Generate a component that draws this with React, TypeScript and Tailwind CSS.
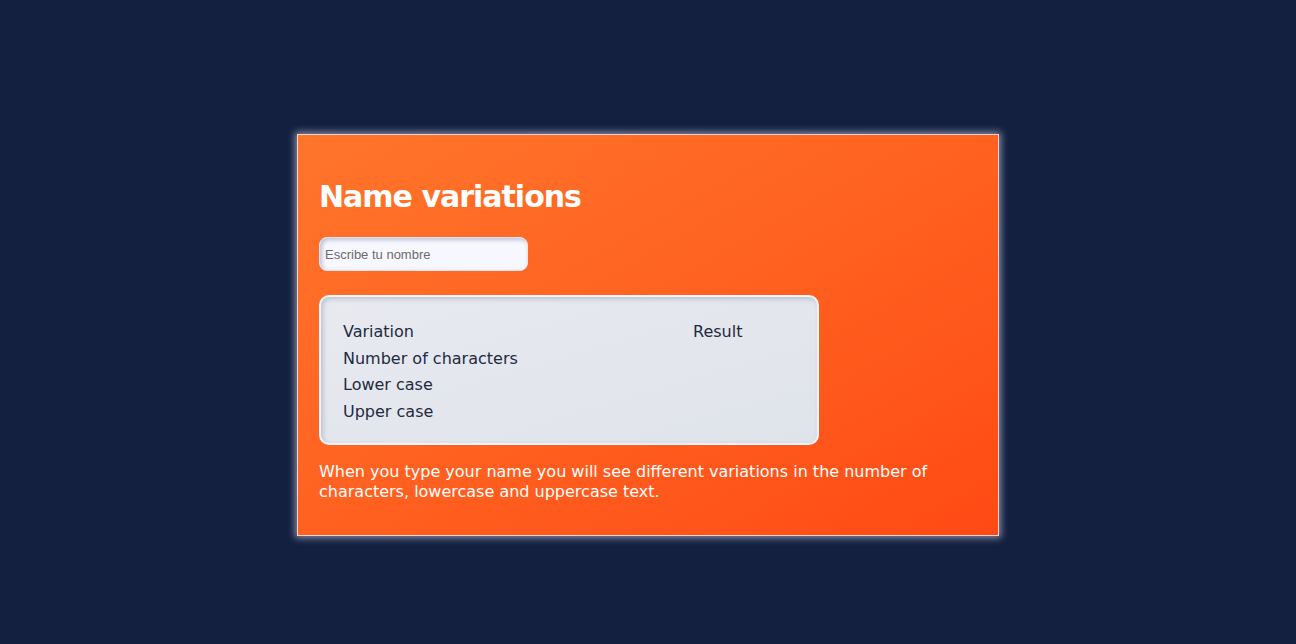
export default function App() {
  return (
    <div className="min-h-screen w-full bg-[#13203f] pt-[134px] font-['DejaVu_Sans',sans-serif]">
      <div className="mx-auto w-[702px] h-[402px] border border-[#f3d6c8] bg-gradient-to-br from-[#ff752b] to-[#ff4914] px-[21px] pt-[42px] shadow-[0_0_7px_2px_rgba(230,230,255,0.55)]">
        <h1 className="text-[30px] font-bold leading-[40px] text-white tracking-[-1px]">
          Name variations
        </h1>

        <input
          type="text"
          placeholder="Escribe tu nombre"
          className="mt-[20px] block w-[209px] h-[34px] rounded-[8px] border border-[#dfe3f3] bg-[#f7f8ff] px-[5px] text-[13px] font-['Liberation_Sans',sans-serif] text-[#333] placeholder:text-[#6b6b6b] shadow-[inset_2px_2px_4px_rgba(80,90,130,0.35)] outline-none"
        />

        <div className="mt-[24px] w-[500px] h-[150px] rounded-[10px] border-2 border-[#f4f5f9] bg-gradient-to-br from-[#e8eaf0] to-[#dfe3ea] px-[22px] pt-[22px] shadow-[inset_2px_2px_5px_rgba(90,100,140,0.3)] text-[#232a3e] text-[16px] leading-[26.5px]">
          <div className="grid grid-cols-[350px_1fr]">
            <div className="font-medium">Variation</div>
            <div className="font-medium">Result</div>
            <div>Number of characters</div>
            <div></div>
            <div>Lower case</div>
            <div></div>
            <div>Upper case</div>
            <div></div>
          </div>
        </div>

        <p className="mt-[17px] w-[636px] text-[16px] leading-[20px] text-white">
          When you type your name you will see different variations in the number of characters, lowercase and uppercase text.
        </p>
      </div>
    </div>
  );
}
